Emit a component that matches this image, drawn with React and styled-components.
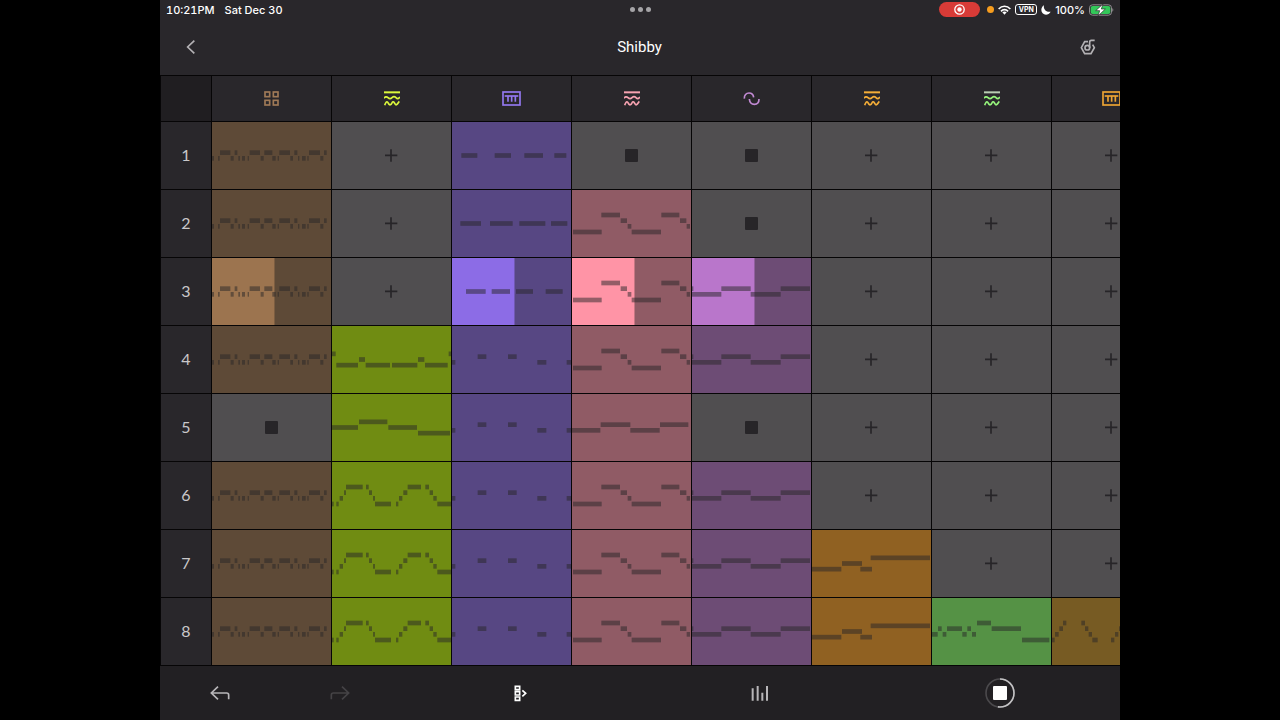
import styled, { createGlobalStyle } from "styled-components";

const GlobalStyle = createGlobalStyle`
  * {
    box-sizing: border-box;
  }

  body {
    margin: 0;
    background: #000;
    font-family: Inter, "Liberation Sans", sans-serif;
  }

  button {
    appearance: none;
    border: 0;
    margin: 0;
    padding: 0;
    background: none;
    color: inherit;
    font: inherit;
    cursor: pointer;
  }

  svg {
    display: block;
  }
`;

const Tablet = styled.div`
  display: flex;
  flex-direction: column;
  height: 100vh;
  aspect-ratio: 4 / 3;
  max-width: 100%;
  margin: 0 auto;
  overflow: hidden;
  background: #29272b;
  color: #fff;
`;

const StatusBar = styled.div`
  display: grid;
  grid-template-columns: 1fr auto 1fr;
  align-items: center;
  height: 19px;
  padding: 0 6px;
  font-size: 11px;
  font-weight: 500;
`;

const Clock = styled.div`
  display: flex;
  gap: 10px;
  font-variant-numeric: tabular-nums;
`;

const MoreDots = styled.button`
  display: flex;
  gap: 3px;
`;

const Dot = styled.span`
  width: ${({ $size }) => $size}px;
  height: ${({ $size }) => $size}px;
  border-radius: 50%;
  background: ${({ $color }) => $color};
`;

const Indicators = styled.div`
  display: flex;
  justify-content: flex-end;
  align-items: center;
  gap: 4px;
`;

const RecordPill = styled.span`
  display: flex;
  align-items: center;
  justify-content: center;
  width: 41px;
  height: 15px;
  margin-right: 3px;
  border-radius: 8px;
  background: #d83b37;
`;

const VpnBadge = styled.span`
  display: flex;
  align-items: center;
  justify-content: center;
  width: 22px;
  height: 11px;
  border: 1px solid #fff;
  border-radius: 3px;
  font-size: 7px;
  font-weight: 700;
`;

const TitleBar = styled.header`
  display: grid;
  grid-template-columns: 1fr auto 1fr;
  align-items: center;
  height: 56px;
  padding: 0 24px 0 23px;
`;

const Title = styled.h1`
  margin: 0;
  font-family: Roboto, "Liberation Sans", sans-serif;
  font-size: 15px;
  font-weight: 400;
`;

const BarButton = styled.button`
  display: flex;
  justify-self: ${({ $side }) => $side};
  padding: 4px 0;
  color: #b3b1b4;
`;

const Session = styled.main`
  display: grid;
  grid-template-columns: 50px repeat(8, 119px);
  grid-template-rows: 45px;
  grid-auto-rows: 67px;
  gap: 1px;
  padding: 1px 0 1px 1px;
  overflow: hidden;
  background: #060506;
`;

const Corner = styled.div`
  background: #201e21;
`;

const TrackHead = styled.button`
  display: flex;
  align-items: center;
  justify-content: center;
  background: #29272b;
  color: ${({ $color }) => $color};
`;

const SceneButton = styled.button`
  padding-bottom: 2px;
  background: #29272b;
  color: #c9c8ca;
  font-family: Lato, "Liberation Sans", sans-serif;
  font-size: 16px;
`;

const Slot = styled.button`
  display: flex;
  align-items: center;
  justify-content: center;
  background: ${({ $color }) => $color || "#504e50"};
  color: #272528;
`;

const StopMark = styled.span`
  width: 13px;
  height: 13px;
  border-radius: 1px;
  background: #272528;
`;

const Toolbar = styled.nav`
  display: grid;
  grid-template-columns: 1fr 1fr 2fr 2fr 2fr;
  flex: 1;
  align-items: center;
  background: #222023;
`;

const ToolButton = styled.button`
  display: flex;
  justify-self: center;
  color: ${({ $color }) => $color || "#b8b6b9"};

  &:disabled {
    color: #454346;
    cursor: default;
  }
`;

const PROGRESS = 0.525;

// Clip drawings use a 357 x 201 box; a note is [start, length] on a pitch level.
const NOTE_HEIGHT = 14;
const LEVEL_STEP = 17;
const TOP_LEVEL = 68;

const beat = {
  1: [[24, 31], [68, 8], [113, 31], [157, 24], [202, 32], [247, 9], [291, 33], [336, 8]],
  2: [[0, 6], [18, 5], [56, 9], [79, 5], [90, 9], [107, 4], [146, 9], [181, 10], [197, 4], [235, 8], [258, 4], [270, 11], [286, 4], [325, 9]],
};

const limeHook = {
  0.5: [[0, 11], [350, 7]],
  1.5: [[81, 18], [258, 19]],
  2.5: [[13, 65], [101, 73], [180, 76], [279, 68]],
};

const limeSteps = {
  0.5: [[81, 85]],
  1.5: [[0, 78], [169, 86]],
  2.5: [[258, 96]],
};

const limeArp = {
  0: [[42, 50], [102, 8], [227, 40], [280, 11]],
  1: [[36, 6], [111, 9], [214, 12], [293, 10]],
  2: [[23, 10], [123, 6], [201, 10], [304, 10]],
  3: [[0, 5], [13, 7], [129, 48], [192, 7], [316, 41]],
};

const keysA = { 1.5: [[28, 48], [128, 49], [217, 56], [307, 36]] };
const keysB = { 1.5: [[25, 62], [114, 68], [202, 78], [297, 49]] };
const keysC = { 1.5: [[42, 59], [119, 55], [192, 51], [281, 51]] };
const keysD = {
  1: [[77, 26], [168, 26]],
  2: [[0, 10], [256, 27], [344, 13]],
};

const leadA = {
  0: [[88, 56], [268, 54]],
  1: [[146, 19], [324, 19]],
  2: [[167, 11], [344, 10]],
  3: [[3, 86], [179, 88]],
};

const leadB = {
  1: [[86, 89], [264, 85]],
  2: [[0, 85], [175, 88]],
};

const bass = {
  1: [[0, 4], [88, 88], [266, 88]],
  2: [[0, 88], [176, 90]],
};

const pad = {
  0.5: [[176, 178]],
  1.5: [[90, 60]],
  2.5: [[0, 88], [145, 35]],
};

const mallet = {
  0: [[135, 42]],
  1: [[18, 11], [45, 45], [106, 11], [179, 88]],
  2: [[0, 17], [32, 11], [91, 13], [120, 12]],
  3: [[270, 82]],
};

const organ = {
  0: [[33, 10], [88, 11]],
  1: [[22, 11], [99, 10], [201, 11]],
  2: [[9, 11], [110, 10], [189, 10]],
  3: [[0, 8], [121, 16], [177, 10]],
};

const STOP = "stop";

const tracks = [
  { name: "Drums", icon: "pads", color: "#a07a57", dim: "#5e4a37", lit: "#9c744f", clips: [beat, beat, beat, beat, STOP, beat, beat, beat] },
  { name: "Wavetable", icon: "waves", color: "#dcf83c", dim: "#708c12", clips: [null, null, null, limeHook, limeSteps, limeArp, limeArp, limeArp] },
  { name: "Keys", icon: "keys", color: "#9478f0", dim: "#574783", lit: "#8c6ce6", clips: [keysA, keysB, keysC, keysD, keysD, keysD, keysD, keysD] },
  { name: "Lead", icon: "waves", color: "#f7a3b1", dim: "#905b65", lit: "#ff94a6", clips: [STOP, leadA, leadA, leadA, leadB, leadA, leadA, leadA] },
  { name: "Bass", icon: "drift", color: "#c28ad4", dim: "#6d4c75", lit: "#b976cb", clips: [STOP, STOP, bass, bass, STOP, bass, bass, bass] },
  { name: "Pad", icon: "waves", color: "#f5ae38", dim: "#906122", clips: [null, null, null, null, null, null, pad, pad] },
  { name: "Mallet", icon: "waves", color: "#96f57c", topLine: "#b9cdb3", dim: "#559245", clips: [null, null, null, null, null, null, null, mallet] },
  { name: "Organ", icon: "keys", color: "#eda433", dim: "#775b23", clips: [null, null, null, null, null, null, null, organ] },
];

const scenes = [1, 2, 3, 4, 5, 6, 7, 8];
const PLAYING_SCENE = 3;

const PadsIcon = () => (
  <svg width="15" height="15" viewBox="0 0 45 45" fill="none" stroke="currentColor" strokeWidth="5">
    <rect x="3" y="3" width="14" height="14" />
    <rect x="28" y="3" width="14" height="14" />
    <rect x="3" y="28" width="14" height="14" />
    <rect x="28" y="28" width="14" height="14" />
  </svg>
);

const WavesIcon = ({ topLine }) => (
  <svg width="16" height="15" viewBox="0 0 48 45" fill="none" stroke="currentColor" strokeWidth="5">
    <path d="M0 4H48" stroke={topLine || "currentColor"} strokeWidth="6" />
    <path d="M0 22C3 17 8 16 12 20S20 24 24 20S32 16 36 20S44 24 48 18" />
    <path d="M2 43C5 34 8 30 11 34S16 44 20 41S25 30 29 33S34 44 38 41S43 34 46 31" />
  </svg>
);

const KeysIcon = () => (
  <svg width="19" height="15" viewBox="0 0 57 45" fill="none" stroke="currentColor" strokeWidth="5">
    <rect x="3" y="3" width="51" height="39" />
    <path d="M8 15H49" />
    <path d="M18 15V32M29 15V32M40 15V32" />
  </svg>
);

const DriftIcon = () => (
  <svg width="17" height="15" viewBox="0 0 51 45" fill="none" stroke="currentColor" strokeWidth="5">
    <path d="M4 23C3 12 10 6 18 6S31 11 32 19" />
    <path d="M19 24C20 34 26 40 34 40S48 34 48 24" />
  </svg>
);

const trackIcons = { pads: PadsIcon, waves: WavesIcon, keys: KeysIcon, drift: DriftIcon };

const PlusIcon = () => (
  <svg width="13" height="13" viewBox="0 0 39 39" stroke="currentColor" strokeWidth="5">
    <path d="M0 19H37M18 1V38" />
  </svg>
);

const ClipView = ({ notes, lit }) => (
  <svg width="100%" height="100%" viewBox="0 0 357 201" preserveAspectRatio="none">
    {lit && <rect width={357 * PROGRESS} height="201" fill={lit} />}
    {Object.entries(notes).map(([level, row]) =>
      row.map(([start, length]) => (
        <rect
          key={`${level}-${start}`}
          x={start}
          y={TOP_LEVEL + level * LEVEL_STEP}
          width={length}
          height={NOTE_HEIGHT}
          fill="#272528"
          fillOpacity="0.5"
        />
      ))
    )}
  </svg>
);

const ClipSlot = ({ track, scene }) => {
  const clip = track.clips[scene - 1];
  const label = `${track.name} ${scene}`;

  if (!clip) {
    return <Slot aria-label={`${label} empty`}><PlusIcon /></Slot>;
  }
  if (clip === STOP) {
    return <Slot aria-label={`${label} stop`}><StopMark /></Slot>;
  }
  return (
    <Slot $color={track.dim} aria-label={label}>
      <ClipView notes={clip} lit={scene === PLAYING_SCENE ? track.lit : null} />
    </Slot>
  );
};

const StatusIndicators = () => (
  <Indicators>
    <RecordPill>
      <svg width="11" height="11" viewBox="0 0 11 11">
        <circle cx="5.5" cy="5.5" r="4.7" fill="none" stroke="#fff" strokeWidth="1.3" />
        <circle cx="5.5" cy="5.5" r="2.2" fill="#fff" />
      </svg>
    </RecordPill>
    <Dot $size={7} $color="#f79d1e" />
    <svg width="13" height="10" viewBox="0 0 39 30" fill="none" stroke="#fff" strokeWidth="5">
      <path d="M2 12C12 1 27 1 37 12" />
      <path d="M9 19C15 12 24 12 30 19" />
      <path d="M19.500 29L13 22C17 18.500 22 18.500 26 22Z" fill="#fff" stroke="none" />
    </svg>
    <VpnBadge>VPN</VpnBadge>
    <svg width="10" height="10" viewBox="0 0 30 30" fill="#fff">
      <path d="M9 1C6 13 16 23 29 20C26 26 20 29 15 29C7 29 1 23 1 15C1 9 4 4 9 1Z" />
    </svg>
    <span>100%</span>
    <svg width="25" height="12" viewBox="0 0 75 36">
      <rect x="1.500" y="2.500" width="66" height="31" rx="9" fill="none" stroke="#8f8d90" strokeWidth="3" />
      <rect x="5" y="6" width="59" height="24" rx="6" fill="#33c759" />
      <path d="M70 13C74 14 74 22 70 23Z" fill="#8f8d90" />
      <path d="M42 0L20 20H32L27 36L49 15H37Z" fill="#fff" stroke="#29272b" strokeWidth="2" />
    </svg>
  </Indicators>
);

const TransportIcon = () => (
  <svg width="30" height="30" viewBox="0 0 30 30" fill="none" strokeWidth="1.6">
    <circle cx="15" cy="15" r="14" stroke="#4b494c" />
    <circle
      cx="15"
      cy="15"
      r="14"
      stroke="#c4c3c5"
      pathLength="1"
      strokeDasharray={`${PROGRESS} 1`}
      transform="rotate(-90 15 15)"
    />
    <rect x="8" y="8" width="14" height="14" rx="1" fill="#fff" />
  </svg>
);

const App = () => (
  <>
    <GlobalStyle />
    <Tablet>
      <StatusBar>
        <Clock>
          <span>10:21PM</span>
          <span>Sat Dec 30</span>
        </Clock>
        <MoreDots aria-label="Multitasking">
          <Dot $size={5} $color="#a5a4a7" />
          <Dot $size={5} $color="#a5a4a7" />
          <Dot $size={5} $color="#a5a4a7" />
        </MoreDots>
        <StatusIndicators />
      </StatusBar>

      <TitleBar>
        <BarButton $side="start" aria-label="Back">
          <svg width="16" height="14" viewBox="0 0 48 42" fill="none" stroke="currentColor" strokeWidth="5">
            <path d="M34 2L14 21L34 40" />
          </svg>
        </BarButton>
        <Title>Shibby</Title>
        <BarButton $side="end" aria-label="Set settings">
          <svg width="16" height="16" viewBox="0 0 48 48" fill="none" stroke="currentColor" strokeWidth="5">
            <path d="M24 8H14L4 26L14 44H33L43 26L38 17" />
            <circle cx="22" cy="26" r="7" />
            <path d="M29 27V9Q29 4 34 4H44" />
          </svg>
        </BarButton>
      </TitleBar>

      <Session>
        <Corner />
        {tracks.map((track) => {
          const Icon = trackIcons[track.icon];
          return (
            <TrackHead key={track.name} $color={track.color} aria-label={track.name}>
              <Icon topLine={track.topLine} />
            </TrackHead>
          );
        })}
        {scenes.map((scene) => [
          <SceneButton key={scene}>{scene}</SceneButton>,
          ...tracks.map((track) => (
            <ClipSlot key={`${track.name}-${scene}`} track={track} scene={scene} />
          )),
        ])}
      </Session>

      <Toolbar>
        <ToolButton aria-label="Undo">
          <svg width="20" height="15" viewBox="0 0 60 45" fill="none" stroke="currentColor" strokeWidth="5">
            <path d="M24 2L4 21L24 40M4 21H50Q56 21 56 27V40" />
          </svg>
        </ToolButton>
        <ToolButton aria-label="Redo" disabled>
          <svg width="20" height="15" viewBox="0 0 60 45" fill="none" stroke="currentColor" strokeWidth="5">
            <path d="M36 2L56 21L36 40M56 21H10Q4 21 4 27V40" />
          </svg>
        </ToolButton>
        <ToolButton $color="#fff" aria-label="Session view">
          <svg width="13" height="17" viewBox="0 0 39 51" fill="none" stroke="currentColor" strokeWidth="5">
            <path d="M4 4H17V14H4ZM4 20H17V30H4ZM4 36H17V46H4Z" />
            <path d="M25 16L35 25L25 34" />
          </svg>
        </ToolButton>
        <ToolButton aria-label="Mixer">
          <svg width="18" height="15" viewBox="0 0 54 45" fill="none" stroke="currentColor" strokeWidth="6">
            <path d="M5 7V44M20 0V44M34 20V44M48 0V44" />
          </svg>
        </ToolButton>
        <ToolButton aria-label="Stop">
          <TransportIcon />
        </ToolButton>
      </Toolbar>
    </Tablet>
  </>
);

export default App;
